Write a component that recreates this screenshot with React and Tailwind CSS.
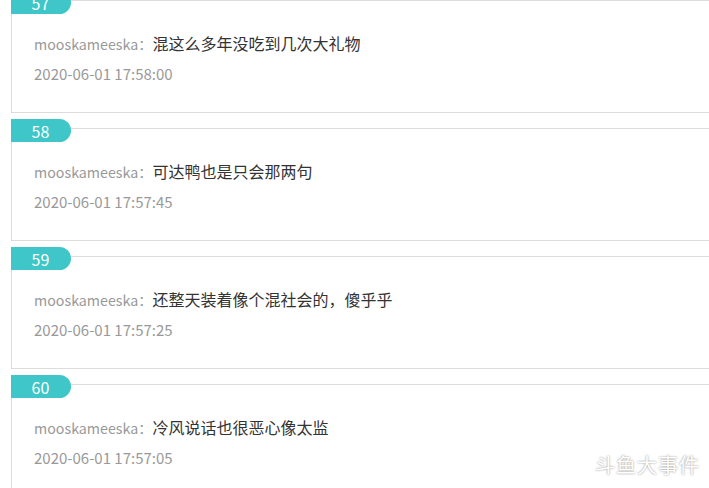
import React from 'react';

const comments = [
  { no: 57, user: 'mooskameeska', text: '混这么多年没吃到几次大礼物', time: '2020-06-01 17:58:00' },
  { no: 58, user: 'mooskameeska', text: '可达鸭也是只会那两句', time: '2020-06-01 17:57:45' },
  { no: 59, user: 'mooskameeska', text: '还整天装着像个混社会的，傻乎乎', time: '2020-06-01 17:57:25' },
  { no: 60, user: 'mooskameeska', text: '冷风说话也很恶心像太监', time: '2020-06-01 17:57:05' },
];

const CommentCard = ({ item }) => (
  <div className="mb-[6px]">
    {/* Floor badge */}
    <div className="relative z-10 flex h-[23px] w-[60px] items-center justify-center rounded-r-full bg-[#3ec6c8] pr-[1px] text-[16px] leading-none text-white">
      {item.no}
    </div>
    <div className="-mt-[14px] h-[113px] border border-r-0 border-[#dcdcdc] bg-white pl-[22px] pt-[27px]">
      <div className="text-[14.25px] leading-[30px] text-[#999]">
        {item.user}：<span className="text-[16px] text-[#333]">{item.text}</span>
      </div>
      <div className="text-[15px] leading-[30px] text-[#999]">{item.time}</div>
    </div>
  </div>
);

export default function App() {
  return (
    <div className="relative h-[488px] w-[709px] overflow-hidden bg-white font-['Noto_Sans_CJK_SC',sans-serif]">
      <div className="-mt-[9px] pl-[11px]">
        {comments.map((item) => (
          <CommentCard key={item.no} item={item} />
        ))}
      </div>
      {/* Watermark */}
      <div className="absolute bottom-[13px] right-[9px] text-[20px] leading-none tracking-[1px] text-white [text-shadow:0_0_2px_rgba(0,0,0,0.5)]">
        斗鱼大事件
      </div>
    </div>
  );
}
